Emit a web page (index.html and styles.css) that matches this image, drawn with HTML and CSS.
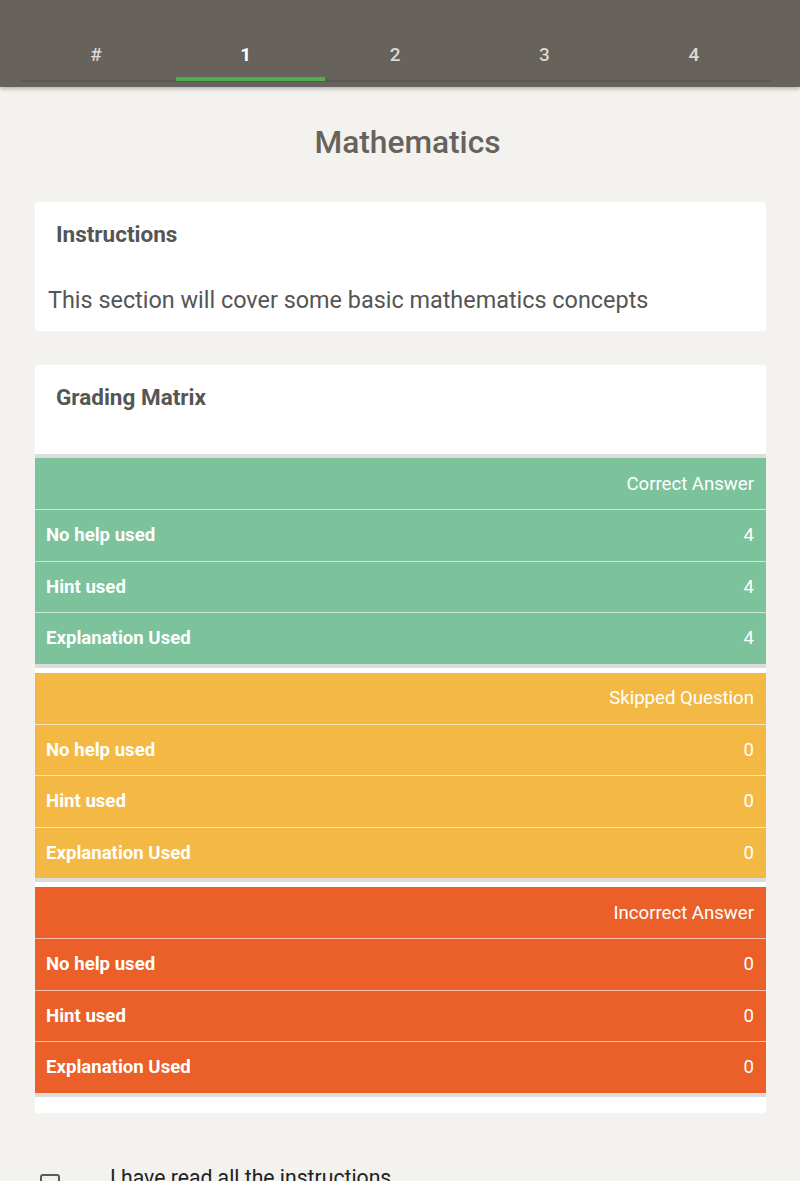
FILE: index.html
```html
<!DOCTYPE html>
<html>
<head>
<meta charset="utf-8">
<link rel="stylesheet" href="styles.css">
</head>
<body>
<header class="topbar">
  <nav class="tabs">
    <div class="tab">#</div>
    <div class="tab active">1</div>
    <div class="tab">2</div>
    <div class="tab">3</div>
    <div class="tab">4</div>
  </nav>
</header>
<main class="content">
  <h1 class="title">Mathematics</h1>
  <section class="card">
    <h2 class="card-title">Instructions</h2>
    <p class="card-text">This section will cover some basic mathematics concepts</p>
  </section>
  <section class="card matrix-card">
    <h2 class="card-title">Grading Matrix</h2>
    <div class="matrix">
      <div class="group green first">
        <div class="row head"><span></span><span class="val">Correct Answer</span></div>
        <div class="row"><span class="lbl">No help used</span><span class="val">4</span></div>
        <div class="row"><span class="lbl">Hint used</span><span class="val">4</span></div>
        <div class="row"><span class="lbl">Explanation Used</span><span class="val">4</span></div>
      </div>
      <div class="group yellow">
        <div class="row head"><span></span><span class="val">Skipped Question</span></div>
        <div class="row"><span class="lbl">No help used</span><span class="val">0</span></div>
        <div class="row"><span class="lbl">Hint used</span><span class="val">0</span></div>
        <div class="row"><span class="lbl">Explanation Used</span><span class="val">0</span></div>
      </div>
      <div class="group orange">
        <div class="row head"><span></span><span class="val">Incorrect Answer</span></div>
        <div class="row"><span class="lbl">No help used</span><span class="val">0</span></div>
        <div class="row"><span class="lbl">Hint used</span><span class="val">0</span></div>
        <div class="row"><span class="lbl">Explanation Used</span><span class="val">0</span></div>
      </div>
    </div>
  </section>
  <label class="agree">
    <span class="box"></span>
    <span class="agree-text">I have read all the instructions</span>
  </label>
</main>
</body>
</html>
```

FILE: styles.css
```css
* { box-sizing: border-box; }
html, body { margin: 0; padding: 0; }
body {
  background: #f3f2ef;
  font-family: Roboto, "Noto Sans", sans-serif;
  color: #555;
  height: 1181px;
  overflow: hidden;
}
.topbar {
  background: #67625b;
  height: 87px;
  box-shadow: 0 2px 4px rgba(0,0,0,0.25);
  padding: 0 29px 0 21px;
  display: flex;
  align-items: flex-end;
}
.tabs {
  display: flex;
  width: 100%;
  border-bottom: 2px solid #5a5650;
  margin-bottom: 5px;
}
.tab {
  flex: 0 0 149.4px;
  position: relative;
  text-align: center;
  color: #ddd9d3;
  font-size: 19px;
  font-weight: 500;
  height: 42px;
  line-height: 24px;
  padding-top: 5px;
}
.tab:first-child { flex: 0 0 150px; }
.tab.active {
  color: #fff;
  font-weight: 700;
}
.tab.active::after {
  content: "";
  position: absolute;
  left: 5px;
  right: -5px;
  bottom: -1px;
  height: 4px;
  background: #4caf50;
}
.content {
  padding: 0 34px 0 35px;
}
.title {
  margin: 0;
  padding: 37px 0 0 14px;
  height: 115px;
  text-align: center;
  font-size: 31.7px;
  font-weight: 500;
  line-height: 38px;
  color: #67625b;
}
.card {
  background: #fff;
  border-radius: 3px;
  padding: 19px 0 17px;
  margin-bottom: 34px;
}
.card-title {
  margin: 0;
  padding-left: 21px;
  font-size: 22.5px;
  font-weight: 700;
  line-height: 27px;
  color: #555;
}
.card-text {
  margin: 38px 0 0;
  padding-left: 13px;
  font-size: 23.4px;
  line-height: 28px;
  color: #555;
}
.matrix-card { padding-top: 19px; padding-bottom: 16px; margin-bottom: 58px; }
.matrix { margin-top: 43px; }
.group {
  border-bottom: 4px solid #dcdcdc;
  margin-bottom: 5px;
  color: #fff;
}
.group:last-child { margin-bottom: 0; }
.group.first { border-top: 4px solid #dcdcdc; }
.green { background: #7cc29b; }
.yellow { background: #f3b944; }
.orange { background: #eb5f28; }
.row {
  display: flex;
  justify-content: space-between;
  align-items: center;
  height: 51.5px;
  padding: 0 12px 0 11px;
  border-top: 1px solid rgba(255,255,255,0.6);
  font-size: 18.6px;
}
.row.head { border-top: none; height: 51px; }
.lbl { font-weight: 700; }
.val { font-weight: 400; }
.agree {
  display: flex;
  align-items: flex-start;
  gap: 50px;
  padding-left: 5px;
}
.box {
  width: 20px;
  height: 20px;
  border: 2px solid #5a5a5a;
  border-radius: 3px;
  margin-top: 3px;
  flex: none;
}
.agree-text {
  font-size: 21.2px;
  color: #222;
  line-height: 24px;
  margin-top: -5px;
}
```
